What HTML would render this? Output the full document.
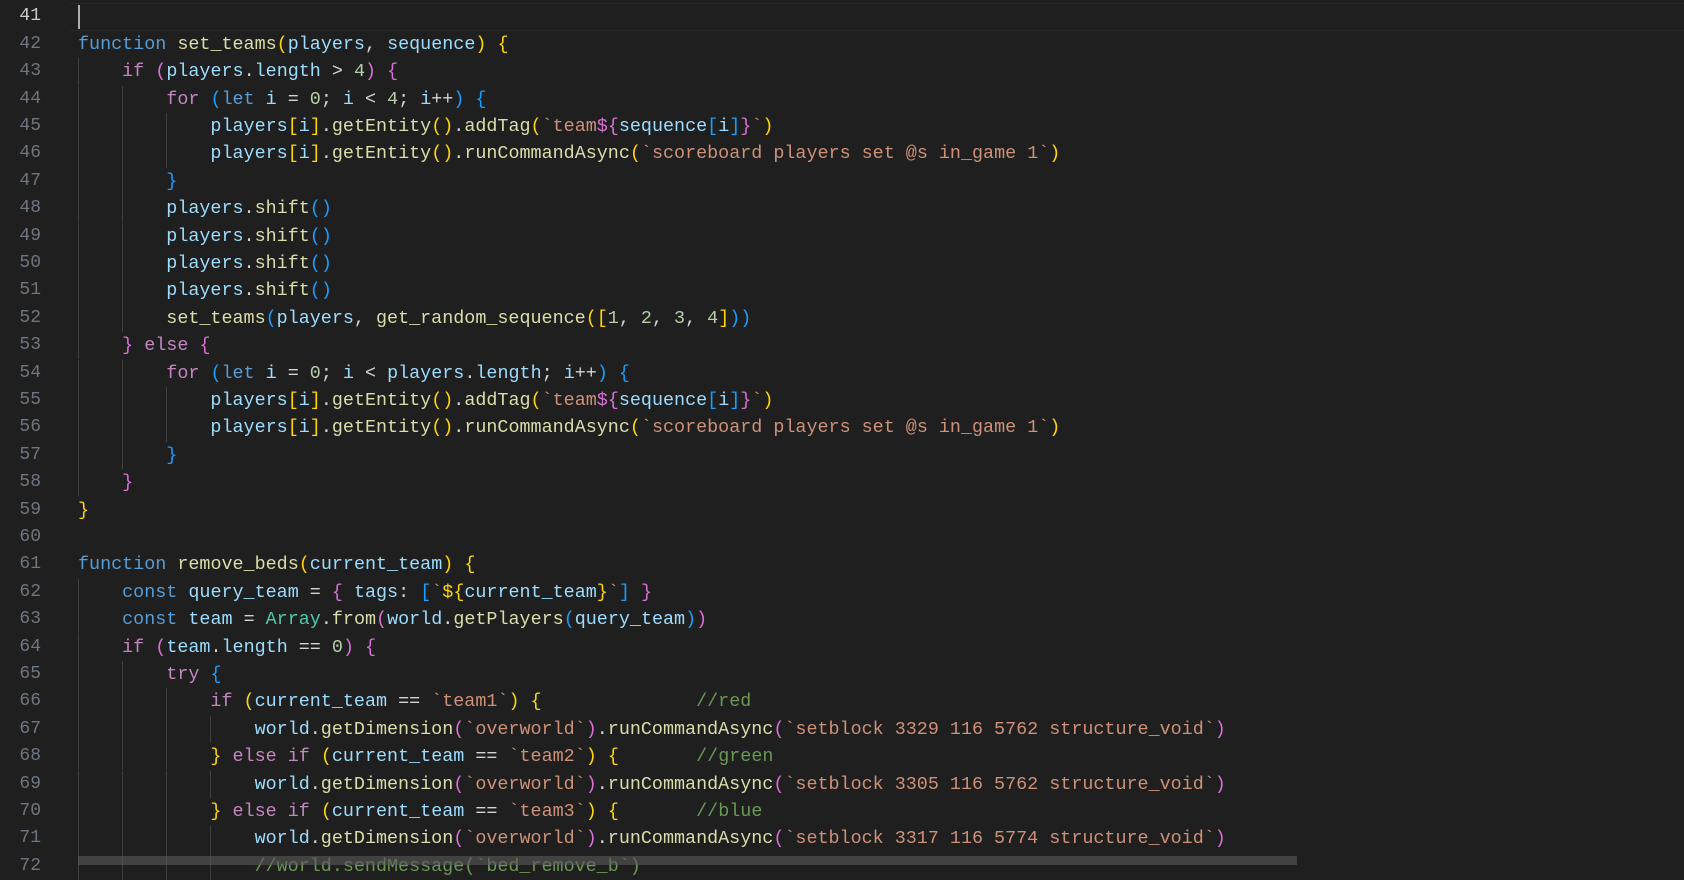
<!DOCTYPE html>
<html><head><meta charset="utf-8"><style>
html,body{margin:0;padding:0;background:#1f1f1f;width:1684px;height:865px;overflow:hidden}
#w{position:absolute;left:0;top:2px;width:1684px;height:865px}
.ln{position:absolute;left:0;width:41px;text-align:right;color:#6e7681;font:18px/27.4px "Liberation Mono",monospace}
.l{position:absolute;left:78px;right:0;height:27.4px;white-space:pre;font:18.4px/27.4px "Liberation Mono",monospace;color:#d4d4d4}
i{display:inline-block;width:4ch;height:27.4px;vertical-align:top;box-shadow:inset 1px 0 0 #404040}
.k{color:#569cd6}.c{color:#c586c0}.f{color:#dcdcaa}.v{color:#9cdcfe}.s{color:#ce9178}.n{color:#b5cea8}.t{color:#4ec9b0}.g{color:#6a9955}
.a{color:#ffd700}.p{color:#da70d6}.b{color:#179fff}
</style></head><body>
<div id="w">
<div style="position:absolute;left:70px;right:0;top:1px;height:26px;border:1px solid #282828;border-left:none;border-right:none"></div>
<div style="position:absolute;left:78px;top:3px;width:2px;height:24px;background:#aeafad"></div>
<div class="ln" style="top:1.3px;color:#cccccc">41</div>
<div class="ln" style="top:28.7px">42</div>
<div class="ln" style="top:56.1px">43</div>
<div class="ln" style="top:83.5px">44</div>
<div class="ln" style="top:110.9px">45</div>
<div class="ln" style="top:138.3px">46</div>
<div class="ln" style="top:165.7px">47</div>
<div class="ln" style="top:193.1px">48</div>
<div class="ln" style="top:220.5px">49</div>
<div class="ln" style="top:247.9px">50</div>
<div class="ln" style="top:275.3px">51</div>
<div class="ln" style="top:302.7px">52</div>
<div class="ln" style="top:330.1px">53</div>
<div class="ln" style="top:357.5px">54</div>
<div class="ln" style="top:384.9px">55</div>
<div class="ln" style="top:412.3px">56</div>
<div class="ln" style="top:439.7px">57</div>
<div class="ln" style="top:467.1px">58</div>
<div class="ln" style="top:494.5px">59</div>
<div class="ln" style="top:521.9px">60</div>
<div class="ln" style="top:549.3px">61</div>
<div class="ln" style="top:576.7px">62</div>
<div class="ln" style="top:604.1px">63</div>
<div class="ln" style="top:631.5px">64</div>
<div class="ln" style="top:658.9px">65</div>
<div class="ln" style="top:686.3px">66</div>
<div class="ln" style="top:713.7px">67</div>
<div class="ln" style="top:741.1px">68</div>
<div class="ln" style="top:768.5px">69</div>
<div class="ln" style="top:795.9px">70</div>
<div class="ln" style="top:823.3px">71</div>
<div class="ln" style="top:850.7px">72</div>

<div class="l" style="top:28.7px"><span class="k">function</span> <span class="f">set_teams</span><span class="a">(</span><span class="v">players</span>, <span class="v">sequence</span><span class="a">)</span> <span class="a">{</span></div>
<div class="l" style="top:56.1px"><i></i><span class="c">if</span> <span class="p">(</span><span class="v">players</span>.<span class="v">length</span> &gt; <span class="n">4</span><span class="p">)</span> <span class="p">{</span></div>
<div class="l" style="top:83.5px"><i></i><i></i><span class="c">for</span> <span class="b">(</span><span class="k">let</span> <span class="v">i</span> = <span class="n">0</span>; <span class="v">i</span> &lt; <span class="n">4</span>; <span class="v">i</span>++<span class="b">)</span> <span class="b">{</span></div>
<div class="l" style="top:110.9px"><i></i><i></i><i></i><span class="v">players</span><span class="a">[</span><span class="v">i</span><span class="a">]</span>.<span class="f">getEntity</span><span class="a">()</span>.<span class="f">addTag</span><span class="a">(</span><span class="s">`team</span><span class="p">${</span><span class="v">sequence</span><span class="b">[</span><span class="v">i</span><span class="b">]</span><span class="p">}</span><span class="s">`</span><span class="a">)</span></div>
<div class="l" style="top:138.3px"><i></i><i></i><i></i><span class="v">players</span><span class="a">[</span><span class="v">i</span><span class="a">]</span>.<span class="f">getEntity</span><span class="a">()</span>.<span class="f">runCommandAsync</span><span class="a">(</span><span class="s">`scoreboard players set @s in_game 1`</span><span class="a">)</span></div>
<div class="l" style="top:165.7px"><i></i><i></i><span class="b">}</span></div>
<div class="l" style="top:193.1px"><i></i><i></i><span class="v">players</span>.<span class="f">shift</span><span class="b">()</span></div>
<div class="l" style="top:220.5px"><i></i><i></i><span class="v">players</span>.<span class="f">shift</span><span class="b">()</span></div>
<div class="l" style="top:247.9px"><i></i><i></i><span class="v">players</span>.<span class="f">shift</span><span class="b">()</span></div>
<div class="l" style="top:275.3px"><i></i><i></i><span class="v">players</span>.<span class="f">shift</span><span class="b">()</span></div>
<div class="l" style="top:302.7px"><i></i><i></i><span class="f">set_teams</span><span class="b">(</span><span class="v">players</span>, <span class="f">get_random_sequence</span><span class="a">([</span><span class="n">1</span>, <span class="n">2</span>, <span class="n">3</span>, <span class="n">4</span><span class="a">]</span><span class="b">)</span><span class="b">)</span></div>
<div class="l" style="top:330.1px"><i></i><span class="p">}</span> <span class="c">else</span> <span class="p">{</span></div>
<div class="l" style="top:357.5px"><i></i><i></i><span class="c">for</span> <span class="b">(</span><span class="k">let</span> <span class="v">i</span> = <span class="n">0</span>; <span class="v">i</span> &lt; <span class="v">players</span>.<span class="v">length</span>; <span class="v">i</span>++<span class="b">)</span> <span class="b">{</span></div>
<div class="l" style="top:384.9px"><i></i><i></i><i></i><span class="v">players</span><span class="a">[</span><span class="v">i</span><span class="a">]</span>.<span class="f">getEntity</span><span class="a">()</span>.<span class="f">addTag</span><span class="a">(</span><span class="s">`team</span><span class="p">${</span><span class="v">sequence</span><span class="b">[</span><span class="v">i</span><span class="b">]</span><span class="p">}</span><span class="s">`</span><span class="a">)</span></div>
<div class="l" style="top:412.3px"><i></i><i></i><i></i><span class="v">players</span><span class="a">[</span><span class="v">i</span><span class="a">]</span>.<span class="f">getEntity</span><span class="a">()</span>.<span class="f">runCommandAsync</span><span class="a">(</span><span class="s">`scoreboard players set @s in_game 1`</span><span class="a">)</span></div>
<div class="l" style="top:439.7px"><i></i><i></i><span class="b">}</span></div>
<div class="l" style="top:467.1px"><i></i><span class="p">}</span></div>
<div class="l" style="top:494.5px"><span class="a">}</span></div>
<div class="l" style="top:549.3px"><span class="k">function</span> <span class="f">remove_beds</span><span class="a">(</span><span class="v">current_team</span><span class="a">)</span> <span class="a">{</span></div>
<div class="l" style="top:576.7px"><i></i><span class="k">const</span> <span class="v">query_team</span> = <span class="p">{</span> <span class="v">tags</span>: <span class="b">[</span><span class="s">`</span><span class="a">${</span><span class="v">current_team</span><span class="a">}</span><span class="s">`</span><span class="b">]</span> <span class="p">}</span></div>
<div class="l" style="top:604.1px"><i></i><span class="k">const</span> <span class="v">team</span> = <span class="t">Array</span>.<span class="f">from</span><span class="p">(</span><span class="v">world</span>.<span class="f">getPlayers</span><span class="b">(</span><span class="v">query_team</span><span class="b">)</span><span class="p">)</span></div>
<div class="l" style="top:631.5px"><i></i><span class="c">if</span> <span class="p">(</span><span class="v">team</span>.<span class="v">length</span> == <span class="n">0</span><span class="p">)</span> <span class="p">{</span></div>
<div class="l" style="top:658.9px"><i></i><i></i><span class="c">try</span> <span class="b">{</span></div>
<div class="l" style="top:686.3px"><i></i><i></i><i></i><span class="c">if</span> <span class="a">(</span><span class="v">current_team</span> == <span class="s">`team1`</span><span class="a">)</span> <span class="a">{</span>              <span class="g">//red</span></div>
<div class="l" style="top:713.7px"><i></i><i></i><i></i><i></i><span class="v">world</span>.<span class="f">getDimension</span><span class="p">(</span><span class="s">`overworld`</span><span class="p">)</span>.<span class="f">runCommandAsync</span><span class="p">(</span><span class="s">`setblock 3329 116 5762 structure_void`</span><span class="p">)</span></div>
<div class="l" style="top:741.1px"><i></i><i></i><i></i><span class="a">}</span> <span class="c">else if</span> <span class="a">(</span><span class="v">current_team</span> == <span class="s">`team2`</span><span class="a">)</span> <span class="a">{</span>       <span class="g">//green</span></div>
<div class="l" style="top:768.5px"><i></i><i></i><i></i><i></i><span class="v">world</span>.<span class="f">getDimension</span><span class="p">(</span><span class="s">`overworld`</span><span class="p">)</span>.<span class="f">runCommandAsync</span><span class="p">(</span><span class="s">`setblock 3305 116 5762 structure_void`</span><span class="p">)</span></div>
<div class="l" style="top:795.9px"><i></i><i></i><i></i><span class="a">}</span> <span class="c">else if</span> <span class="a">(</span><span class="v">current_team</span> == <span class="s">`team3`</span><span class="a">)</span> <span class="a">{</span>       <span class="g">//blue</span></div>
<div class="l" style="top:823.3px"><i></i><i></i><i></i><i></i><span class="v">world</span>.<span class="f">getDimension</span><span class="p">(</span><span class="s">`overworld`</span><span class="p">)</span>.<span class="f">runCommandAsync</span><span class="p">(</span><span class="s">`setblock 3317 116 5774 structure_void`</span><span class="p">)</span></div>
<div class="l" style="top:850.7px"><i></i><i></i><i></i><i></i><span class="g">//world.sendMessage(`bed_remove_b`)</span></div>
</div>
<div style="position:absolute;left:78px;width:1219px;top:856px;height:9px;background:rgba(90,90,90,0.6)"></div>
</body></html>
